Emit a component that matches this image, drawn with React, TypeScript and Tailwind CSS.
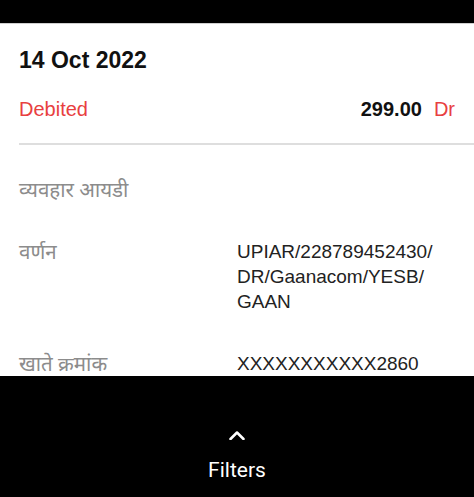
import React from 'react';

const rows = [
  { label: 'व्यवहार आयडी', value: [] as string[] },
  { label: 'वर्णन', value: ['UPIAR/228789452430/', 'DR/Gaanacom/YESB/', 'GAAN'] },
  { label: 'खाते क्रमांक', value: ['XXXXXXXXXXX2860'] },
];

export default function App() {
  return (
    <div className="w-[474px] h-[497px] flex flex-col bg-black overflow-hidden font-['Liberation_Sans','Noto_Sans',sans-serif]">
      {/* status strip */}
      <div className="h-[23px] shrink-0 bg-black" />

      {/* transaction card */}
      <div className="h-[353px] shrink-0 bg-white border-t border-[#cfcfcf] overflow-hidden">
        <div className="pl-[19px] pt-[23px]">
          <div className="text-[23px] leading-[26px] font-bold text-[#111]">14 Oct 2022</div>

          <div className="mt-[24px] pr-[19px] flex items-baseline justify-between text-[20px] leading-[24px]">
            <span className="text-[#e8403f]">Debited</span>
            <span className="flex items-baseline gap-[12px]">
              <span className="font-bold text-[#111]">299.00</span>
              <span className="text-[#e8403f]">Dr</span>
            </span>
          </div>

          <div className="mt-[22px] h-[2px] bg-[#dedede]" />

          <div className="mt-[32px] pr-[19px] flex flex-col gap-[37px] text-[19px] leading-[25px]">
            {rows.map((r) => (
              <div key={r.label} className="flex">
                <div className="w-[218px] shrink-0 text-[20.5px] text-[#8c8c8c] font-['Noto_Sans','Liberation_Sans',sans-serif]">
                  {r.label}
                </div>
                <div className="text-[#222]">
                  {r.value.map((line) => (
                    <div key={line}>{line}</div>
                  ))}
                </div>
              </div>
            ))}
          </div>
        </div>
      </div>

      {/* filters bar */}
      <div className="flex-1 flex flex-col items-center pt-[55px]">
        <svg width="16" height="9" viewBox="0 0 16 9" fill="none">
          <polyline points="1.5,8 8,1.5 14.5,8" stroke="white" strokeWidth="2.5" strokeLinecap="round" strokeLinejoin="round" />
        </svg>
        <div className="mt-[18px] text-[21px] leading-[24px] text-white font-['Roboto',sans-serif]">Filters</div>
      </div>
    </div>
  );
}
